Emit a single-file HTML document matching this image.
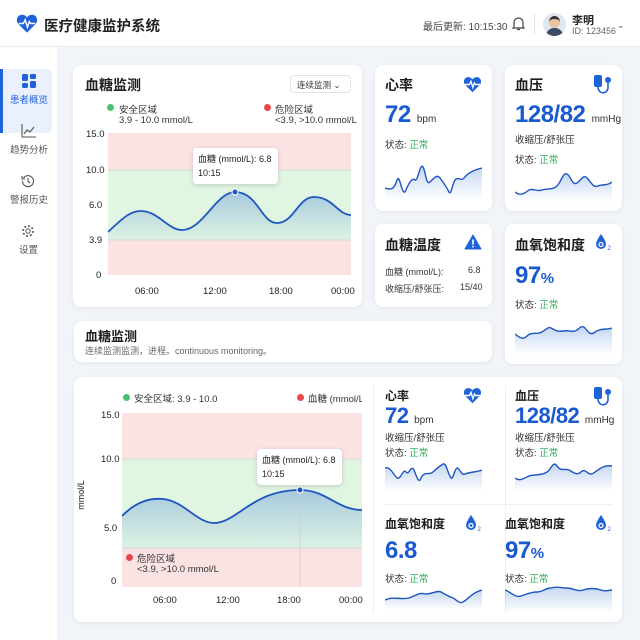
<!DOCTYPE html><html><head><meta charset="utf-8"><style>
*{margin:0;padding:0;box-sizing:border-box}
body{width:640px;height:640px;overflow:hidden;background:#f1f4f8;font-family:"Liberation Sans","Noto Sans CJK SC",sans-serif;color:#222;position:relative}
.a{position:absolute;white-space:nowrap}
.card{position:absolute;background:#fff;border-radius:8px;box-shadow:0 1px 4px rgba(0,0,0,.07)}
.t{font-size:14px;font-weight:bold;color:#1d1d1d}
.big{font-size:24px;font-weight:bold;color:#1a5ad0;letter-spacing:-0.5px}
.u{font-size:10px;color:#333;font-weight:normal;letter-spacing:0}
.s{font-size:9.5px;color:#333}
.g{color:#2fae5a}
.ax{font-size:9.5px;color:#222}
.dot{position:absolute;width:7px;height:7px;border-radius:50%}
.tip{position:absolute;background:#fff;border-radius:4px;box-shadow:0 1px 5px rgba(0,0,0,.18);font-size:9px;padding:4px 5px;line-height:14px}
</style></head><body>
<div class="a" style="left:0;top:0;width:640px;height:47px;background:#fff;border-bottom:1px solid #e8ebef"></div>
<svg class="a" style="left:16px;top:13px" width="22" height="21" viewBox="0 0 24 22"><path d="M12 21 L2.5 11.5 C-0.5 8 1 2 6 1.5 C9 1.2 11 3 12 4.5 C13 3 15 1.2 18 1.5 C23 2 24.5 8 21.5 11.5 Z" fill="#1f63d8"/><path d="M3 11 H8 L10 7 L12.5 15 L14.5 9 L16 11 H21" stroke="#fff" stroke-width="1.6" fill="none"/></svg>
<div class="a" style="left:44px;top:15px;font-size:14.5px;font-weight:bold">医疗健康监护系统</div>
<div class="a" style="left:423px;top:18px;font-size:10px;color:#444">最后更新: 10:15:30</div>
<svg class="a" style="left:512px;top:16px" width="13" height="15" viewBox="0 0 13 15"><path d="M2 11 V6.5 A4.5 4.5 0 0 1 11 6.5 V11 L12 12 H1 Z M5 13.5 H8" stroke="#444" stroke-width="1.2" fill="none"/></svg>
<div class="a" style="left:534px;top:14px;width:1px;height:20px;background:#e3e3e3"></div>
<div class="a" style="left:543px;top:13px;width:23px;height:23px;border-radius:50%;background:#dfe6ee;overflow:hidden"><div class="a" style="left:6px;top:3px;width:11px;height:12px;border-radius:50%;background:#e9c2a0;border-top:3px solid #333"></div><div class="a" style="left:3px;top:15px;width:17px;height:10px;border-radius:8px 8px 0 0;background:#3a4a66"></div></div>
<div class="a" style="left:572px;top:12px;font-size:11px;font-weight:bold">李明</div>
<div class="a" style="left:572px;top:26px;font-size:9px;color:#666">ID: 123456</div>
<div class="a" style="left:617px;top:20px;font-size:9px;color:#555">⌄</div>
<div class="a" style="left:0;top:47px;width:57px;height:593px;background:#fff"></div>
<div class="a" style="left:2px;top:69px;width:50px;height:64px;background:#eaf1fc;border-radius:4px"></div>
<div class="a" style="left:0;top:69px;width:3px;height:64px;background:#1f63d8"></div>
<svg class="a" style="left:22px;top:74px" width="14" height="14" viewBox="0 0 14 14" fill="#1f63d8"><rect x="0" y="0" width="6" height="7" rx="1.5"/><rect x="8" y="0" width="6" height="5" rx="1.5"/><rect x="0" y="9" width="6" height="5" rx="1.5"/><rect x="8" y="7" width="6" height="7" rx="1.5"/></svg>
<div class="a" style="left:10px;top:92px;font-size:9.5px;color:#1f63d8">患者概览</div>
<svg class="a" style="left:21px;top:124px" width="15" height="14" viewBox="0 0 15 14"><path d="M1 0 V13 H15 M3 10 L6 6 L9 8 L13 3" stroke="#555" stroke-width="1.1" fill="none"/></svg>
<div class="a" style="left:10px;top:142px;font-size:9.5px;color:#555">趋势分析</div>
<svg class="a" style="left:21px;top:174px" width="14" height="14" viewBox="0 0 14 14"><path d="M2.5 4 A5.5 5.5 0 1 1 1.5 7 M1 2 V5 H4 M7 4 V7.5 L9 9" stroke="#555" stroke-width="1.1" fill="none"/></svg>
<div class="a" style="left:10px;top:192px;font-size:9.5px;color:#555">警报历史</div>
<svg class="a" style="left:21px;top:224px" width="14" height="14" viewBox="0 0 14 14"><circle cx="7" cy="7" r="2.2" stroke="#555" fill="none"/><circle cx="7" cy="7" r="5" stroke="#555" stroke-width="1.6" stroke-dasharray="2 1.9" fill="none"/></svg>
<div class="a" style="left:19px;top:242px;font-size:9.5px;color:#555">设置</div>

<div class="card" style="left:73px;top:65px;width:289px;height:242px"></div>
<div class="a t" style="left:85px;top:75px">血糖监测</div>
<div class="a" style="left:290px;top:75px;width:61px;height:18px;border:1px solid #e2e2e2;border-radius:4px;font-size:8.5px;padding:3px 0 0 6px;color:#333">连续监测 ⌄</div>
<div class="dot" style="left:107px;top:104px;background:#4cc072"></div>
<div class="a s" style="left:119px;top:102px">安全区域</div>
<div class="a s" style="left:119px;top:115px">3.9 - 10.0 mmol/L</div>
<div class="dot" style="left:264px;top:104px;background:#e5484d"></div>
<div class="a s" style="left:275px;top:102px">危险区域</div>
<div class="a s" style="left:275px;top:115px">&lt;3.9, &gt;10.0 mmol/L</div>
<svg class="a" style="left:108px;top:133px" width="243" height="142">
<defs><linearGradient id="gf" x1="0" y1="0" x2="0" y2="1"><stop offset="0" stop-color="#3a78d0" stop-opacity=".35"/><stop offset="1" stop-color="#3a78d0" stop-opacity="0"/></linearGradient></defs>
<rect width="243" height="37" fill="#fbe3e3"/><rect y="37" width="243" height="70" fill="#e1f5e3"/><rect y="107" width="243" height="35" fill="#fbe3e3"/>
<line x1="0" y1="37" x2="243" y2="37" stroke="#d8dcd8"/><line x1="0" y1="107" x2="243" y2="107" stroke="#d8dcd8"/>
<path d="M0 99 C15 85 22 78 33 78 C50 78 60 97 74 97 C95 97 108 59 127 59 C150 59 153 90 169 90 C186 90 190 64 206 64 C225 64 230 82 243 82 L243 110 L0 110 Z" fill="url(#gf)"/>
<path d="M0 99 C15 85 22 78 33 78 C50 78 60 97 74 97 C95 97 108 59 127 59 C150 59 153 90 169 90 C186 90 190 64 206 64 C225 64 230 82 243 82" stroke="#1f55c0" stroke-width="1.8" fill="none"/>
<circle cx="127" cy="59" r="3" fill="#1f55c0" stroke="#fff"/></svg>
<div class="a ax" style="left:86px;top:129px">15.0</div><div class="a ax" style="left:86px;top:165px">10.0</div><div class="a ax" style="left:89px;top:200px">6.0</div><div class="a ax" style="left:89px;top:235px">3.9</div><div class="a ax" style="left:96px;top:270px">0</div>
<div class="a ax" style="left:135px;top:286px">06:00</div><div class="a ax" style="left:203px;top:286px">12:00</div><div class="a ax" style="left:269px;top:286px">18:00</div><div class="a ax" style="left:331px;top:286px">00:00</div>
<div class="tip" style="left:193px;top:148px;width:85px">血糖 (mmol/L): 6.8<br>10:15</div>

<div class="card" style="left:375px;top:65px;width:117px;height:146px"></div>
<div class="a t" style="left:385px;top:75px">心率</div>
<svg class="a" style="left:463px;top:76px" width="19" height="17" viewBox="0 0 24 22"><path d="M12 21 L2.5 11.5 C-0.5 8 1 2 6 1.5 C9 1.2 11 3 12 4.5 C13 3 15 1.2 18 1.5 C23 2 24.5 8 21.5 11.5 Z" fill="#1f63d8"/><path d="M2 11 H8 L10 7 L12.5 15 L14.5 9 L16 11 H22" stroke="#fff" stroke-width="1.8" fill="none"/></svg>
<div class="a big" style="left:385px;top:101px">72 <span class="u">bpm</span></div>
<div class="a s" style="left:385px;top:137px">状态: <span class="g">正常</span></div>
<svg class="a" style="left:385px;top:160px" width="97" height="40"><defs><linearGradient id="sg" x1="0" y1="0" x2="0" y2="1"><stop offset="0" stop-color="#3a78d0" stop-opacity=".3"/><stop offset="1" stop-color="#3a78d0" stop-opacity="0"/></linearGradient></defs>
<path d="M0 28 C6 30 9 30 12 20 C15 12 17 40 21 30 C25 20 28 18 30 20 C33 22 35 2 38 7 C41 12 41 26 45 22 C49 18 52 14 55 18 C58 22 62 28 64 32 C66 36 67 25 70 20 C73 16 76 22 79 18 C82 14 88 10 97 8 L97 40 L0 40Z" fill="url(#sg)"/>
<path d="M0 28 C6 30 9 30 12 20 C15 12 17 40 21 30 C25 20 28 18 30 20 C33 22 35 2 38 7 C41 12 41 26 45 22 C49 18 52 14 55 18 C58 22 62 28 64 32 C66 36 67 25 70 20 C73 16 76 22 79 18 C82 14 88 10 97 8" stroke="#1f55c0" stroke-width="1.4" fill="none"/></svg>

<div class="card" style="left:505px;top:65px;width:117px;height:146px"></div>
<div class="a t" style="left:515px;top:75px">血压</div>
<svg class="a" style="left:593px;top:74px" width="20" height="22" viewBox="0 0 20 22"><rect x="1" y="1" width="8" height="12" rx="2" fill="#1f63d8"/><path d="M5 13 C5 20 14 21 15 14 V9" stroke="#1f63d8" stroke-width="1.6" fill="none"/><circle cx="15" cy="6" r="3" fill="#1f63d8"/></svg>
<div class="a big" style="left:515px;top:101px">128/82 <span class="u">mmHg</span></div>
<div class="a s" style="left:515px;top:132px">收缩压/舒张压</div>
<div class="a s" style="left:515px;top:152px">状态: <span class="g">正常</span></div>
<svg class="a" style="left:515px;top:168px" width="97" height="34">
<path d="M0 24 C5 28 9 26 14 22 C19 20 22 24 27 22 C33 20 38 22 42 18 C46 14 48 4 52 6 C56 8 57 18 62 15 C66 12 69 6 72 10 C76 14 78 20 83 18 C88 16 92 18 97 14 L97 34 L0 34Z" fill="url(#sg)"/>
<path d="M0 24 C5 28 9 26 14 22 C19 20 22 24 27 22 C33 20 38 22 42 18 C46 14 48 4 52 6 C56 8 57 18 62 15 C66 12 69 6 72 10 C76 14 78 20 83 18 C88 16 92 18 97 14" stroke="#1f55c0" stroke-width="1.4" fill="none"/></svg>

<div class="card" style="left:375px;top:224px;width:117px;height:83px"></div>
<div class="a t" style="left:385px;top:235px">血糖温度</div>
<svg class="a" style="left:464px;top:234px" width="18" height="16" viewBox="0 0 18 16"><path d="M9 1 L17 15 H1 Z" fill="#1f63d8" stroke="#1f63d8" stroke-linejoin="round"/><rect x="8.2" y="5.5" width="1.6" height="5" fill="#fff"/><rect x="8.2" y="11.8" width="1.6" height="1.6" fill="#fff"/></svg>
<div class="a" style="left:385px;top:265px;font-size:9px;color:#333">血糖 (mmol/L):</div><div class="a" style="left:468px;top:265px;font-size:9px;color:#333">6.8</div>
<div class="a" style="left:385px;top:282px;font-size:9px;color:#333">收缩压/舒张压:</div><div class="a" style="left:460px;top:282px;font-size:9px;color:#333">15/40</div>

<div class="card" style="left:505px;top:224px;width:117px;height:140px"></div>
<div class="a t" style="left:515px;top:235px">血氧饱和度</div>
<svg class="a" style="left:595px;top:233px" width="18" height="18" viewBox="0 0 18 18"><path d="M6 1 C6 1 1 8 1 11 A5 5 0 0 0 11 11 C11 8 6 1 6 1Z" fill="#1f63d8"/><circle cx="6" cy="11.5" r="2" fill="none" stroke="#fff" stroke-width="1.2"/><text x="12.5" y="17" font-size="6" fill="#1f63d8" font-family="Liberation Sans">2</text></svg>
<div class="a big" style="left:515px;top:262px">97<span style="font-size:15px">%</span></div>
<div class="a s" style="left:515px;top:297px">状态: <span class="g">正常</span></div>
<svg class="a" style="left:515px;top:322px" width="97" height="32">
<path d="M0 12 C5 16 8 18 12 14 C16 10 20 12 24 11 C30 10 32 4 36 6 C40 8 42 10 48 9 C54 8 56 10 60 9 C64 8 66 2 70 6 C73 10 76 14 80 10 C85 6 92 8 97 6 L97 32 L0 32Z" fill="url(#sg)"/>
<path d="M0 12 C5 16 8 18 12 14 C16 10 20 12 24 11 C30 10 32 4 36 6 C40 8 42 10 48 9 C54 8 56 10 60 9 C64 8 66 2 70 6 C73 10 76 14 80 10 C85 6 92 8 97 6" stroke="#1f55c0" stroke-width="1.4" fill="none"/></svg>

<div class="card" style="left:74px;top:321px;width:418px;height:41px"></div>
<div class="a t" style="left:85px;top:326px;font-size:13px">血糖监测</div>
<div class="a" style="left:85px;top:344px;font-size:9px;color:#666">连续监测监测，进程。continuous monitoring。</div>

<div class="card" style="left:74px;top:377px;width:548px;height:245px"></div>
<div class="dot" style="left:123px;top:394px;background:#4cc072"></div>
<div class="a s" style="left:134px;top:391px">安全区域: 3.9 - 10.0</div>
<div class="dot" style="left:297px;top:394px;background:#e5484d"></div>
<div class="a s" style="left:308px;top:391px;width:54px;overflow:hidden">血糖 (mmol/L</div>
<svg class="a" style="left:122px;top:413px" width="240" height="174">
<rect width="240" height="46" fill="#fbe3e3"/><rect y="46" width="240" height="89" fill="#e1f5e3"/><rect y="135" width="240" height="39" fill="#fbe3e3"/>
<line x1="0" y1="46" x2="240" y2="46" stroke="#d8dcd8"/><line x1="0" y1="135" x2="240" y2="135" stroke="#d8dcd8"/>
<path d="M0 103 C15 88 28 85 41 86 C62 88 75 110 92 110 C115 110 130 77 178 77 C205 77 215 97 240 97 L240 140 L0 140Z" fill="url(#gf)"/>
<line x1="178" y1="77" x2="178" y2="174" stroke="#ccc" stroke-width=".7"/>
<path d="M0 103 C15 88 28 85 41 86 C62 88 75 110 92 110 C115 110 130 77 178 77 C205 77 215 97 240 97" stroke="#1f55c0" stroke-width="1.8" fill="none"/>
<circle cx="178" cy="77" r="3" fill="#1f55c0" stroke="#fff"/></svg>
<div class="a ax" style="left:101px;top:410px">15.0</div><div class="a ax" style="left:101px;top:454px">10.0</div><div class="a ax" style="left:104px;top:523px">5.0</div><div class="a ax" style="left:111px;top:576px">0</div>
<div class="a" style="left:66px;top:490px;font-size:9px;transform:rotate(-90deg)">mmol/L</div>
<div class="dot" style="left:126px;top:554px;background:#e5484d"></div>
<div class="a s" style="left:137px;top:551px">危险区域</div>
<div class="a s" style="left:137px;top:564px">&lt;3.9, &gt;10.0 mmol/L</div>
<div class="a ax" style="left:153px;top:595px">06:00</div><div class="a ax" style="left:216px;top:595px">12:00</div><div class="a ax" style="left:277px;top:595px">18:00</div><div class="a ax" style="left:339px;top:595px">00:00</div>
<div class="tip" style="left:257px;top:449px;width:85px">血糖 (mmol/L): 6.8<br>10:15</div>
<div class="a" style="left:373px;top:385px;width:1px;height:228px;background:#eee"></div>
<div class="a" style="left:505px;top:385px;width:1px;height:228px;background:#eee"></div>
<div class="a" style="left:385px;top:504px;width:227px;height:1px;background:#eee"></div>

<div class="a t" style="left:385px;top:387px;font-size:12px">心率</div>
<svg class="a" style="left:463px;top:387px" width="19" height="17" viewBox="0 0 24 22"><path d="M12 21 L2.5 11.5 C-0.5 8 1 2 6 1.5 C9 1.2 11 3 12 4.5 C13 3 15 1.2 18 1.5 C23 2 24.5 8 21.5 11.5 Z" fill="#1f63d8"/><path d="M2 11 H8 L10 7 L12.5 15 L14.5 9 L16 11 H22" stroke="#fff" stroke-width="1.8" fill="none"/></svg>
<div class="a big" style="left:385px;top:403px;font-size:22px">72 <span class="u">bpm</span></div>
<div class="a s" style="left:385px;top:430px">收缩压/舒张压</div>
<div class="a s" style="left:385px;top:445px">状态: <span class="g">正常</span></div>
<svg class="a" style="left:385px;top:460px" width="97" height="32">
<path d="M0 8 C5 6 8 14 12 18 C16 20 18 8 21 12 C24 16 26 4 29 10 C32 18 34 24 36 18 C40 10 44 16 48 12 C52 8 55 6 58 4 C61 2 63 14 66 18 C68 20 70 8 72 8 C75 8 76 16 80 14 C85 12 92 12 97 10 L97 32 L0 32Z" fill="url(#sg)"/>
<path d="M0 8 C5 6 8 14 12 18 C16 20 18 8 21 12 C24 16 26 4 29 10 C32 18 34 24 36 18 C40 10 44 16 48 12 C52 8 55 6 58 4 C61 2 63 14 66 18 C68 20 70 8 72 8 C75 8 76 16 80 14 C85 12 92 12 97 10" stroke="#1f55c0" stroke-width="1.4" fill="none"/></svg>

<div class="a t" style="left:515px;top:387px;font-size:12px">血压</div>
<svg class="a" style="left:593px;top:386px" width="20" height="22" viewBox="0 0 20 22"><rect x="1" y="1" width="8" height="12" rx="2" fill="#1f63d8"/><path d="M5 13 C5 20 14 21 15 14 V9" stroke="#1f63d8" stroke-width="1.6" fill="none"/><circle cx="15" cy="6" r="3" fill="#1f63d8"/></svg>
<div class="a big" style="left:515px;top:403px;font-size:22px">128/82 <span class="u">mmHg</span></div>
<div class="a s" style="left:515px;top:430px">收缩压/舒张压</div>
<div class="a s" style="left:515px;top:445px">状态: <span class="g">正常</span></div>
<svg class="a" style="left:515px;top:460px" width="97" height="32">
<path d="M0 18 C5 22 9 18 14 16 C20 14 26 16 32 12 C36 10 38 0 42 6 C46 12 50 8 54 10 C58 12 62 16 66 12 C70 8 72 14 76 14 C80 14 86 4 97 6 L97 32 L0 32Z" fill="url(#sg)"/>
<path d="M0 18 C5 22 9 18 14 16 C20 14 26 16 32 12 C36 10 38 0 42 6 C46 12 50 8 54 10 C58 12 62 16 66 12 C70 8 72 14 76 14 C80 14 86 4 97 6" stroke="#1f55c0" stroke-width="1.4" fill="none"/></svg>

<div class="a t" style="left:385px;top:515px;font-size:12px">血氧饱和度</div>
<svg class="a" style="left:465px;top:514px" width="18" height="18" viewBox="0 0 18 18"><path d="M6 1 C6 1 1 8 1 11 A5 5 0 0 0 11 11 C11 8 6 1 6 1Z" fill="#1f63d8"/><circle cx="6" cy="11.5" r="2" fill="none" stroke="#fff" stroke-width="1.2"/><text x="12.5" y="17" font-size="6" fill="#1f63d8" font-family="Liberation Sans">2</text></svg>
<div class="a big" style="left:385px;top:537px">6.8</div>
<div class="a s" style="left:385px;top:571px">状态: <span class="g">正常</span></div>
<svg class="a" style="left:385px;top:588px" width="97" height="22">
<path d="M0 12 C8 8 16 12 24 10 C30 8 34 4 40 6 C48 6 52 2 56 4 C60 6 62 8 68 10 C72 12 74 16 78 14 C82 12 88 4 97 2 L97 22 L0 22Z" fill="url(#sg)"/>
<path d="M0 12 C8 8 16 12 24 10 C30 8 34 4 40 6 C48 6 52 2 56 4 C60 6 62 8 68 10 C72 12 74 16 78 14 C82 12 88 4 97 2" stroke="#1f55c0" stroke-width="1.4" fill="none"/></svg>

<div class="a t" style="left:505px;top:515px;font-size:12px">血氧饱和度</div>
<svg class="a" style="left:595px;top:514px" width="18" height="18" viewBox="0 0 18 18"><path d="M6 1 C6 1 1 8 1 11 A5 5 0 0 0 11 11 C11 8 6 1 6 1Z" fill="#1f63d8"/><circle cx="6" cy="11.5" r="2" fill="none" stroke="#fff" stroke-width="1.2"/><text x="12.5" y="17" font-size="6" fill="#1f63d8" font-family="Liberation Sans">2</text></svg>
<div class="a big" style="left:505px;top:537px">97<span style="font-size:15px">%</span></div>
<div class="a s" style="left:505px;top:571px">状态: <span class="g">正常</span></div>
<svg class="a" style="left:505px;top:584px" width="107" height="28">
<path d="M0 6 C6 8 10 14 16 12 C22 10 26 8 32 8 C38 8 40 4 46 4 C52 2 56 4 62 4 C68 4 72 8 78 6 C84 4 90 4 96 6 C100 8 104 6 107 6 L107 28 L0 28Z" fill="url(#sg)"/>
<path d="M0 6 C6 8 10 14 16 12 C22 10 26 8 32 8 C38 8 40 4 46 4 C52 2 56 4 62 4 C68 4 72 8 78 6 C84 4 90 4 96 6 C100 8 104 6 107 6" stroke="#1f55c0" stroke-width="1.4" fill="none"/></svg>
</body></html>
